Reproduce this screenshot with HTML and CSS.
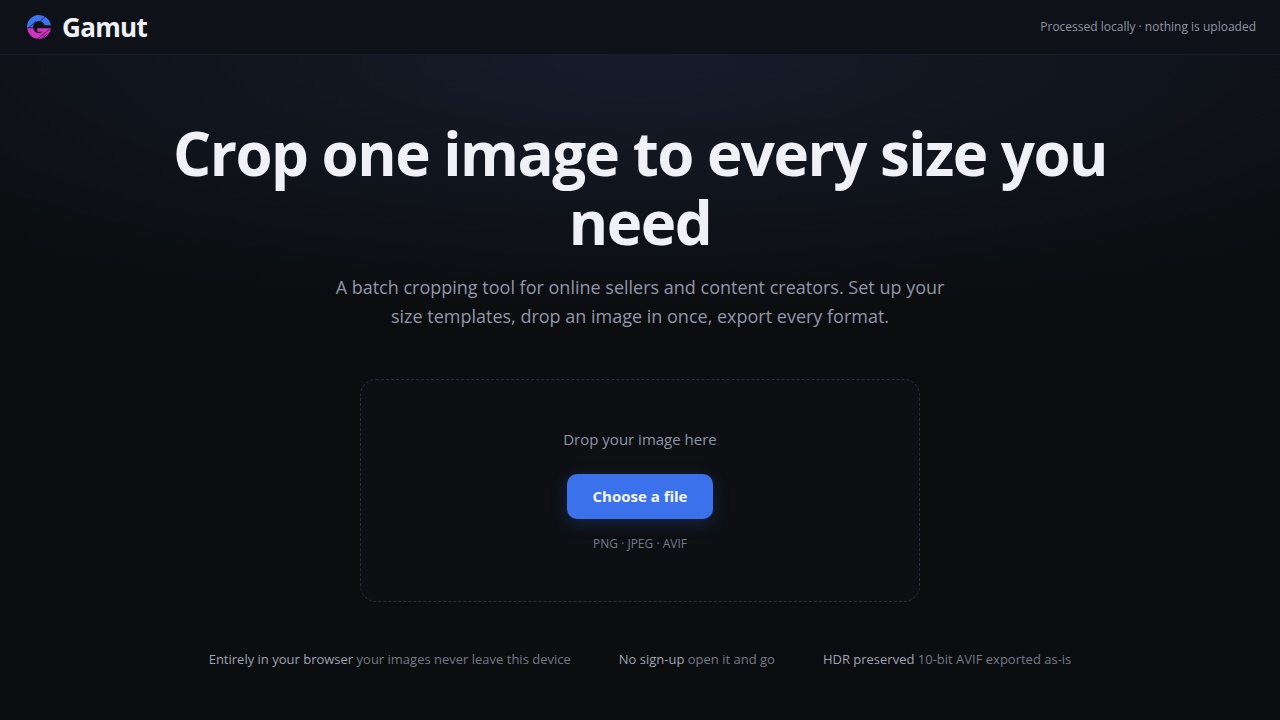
FILE: index.html
```html
<!DOCTYPE html>
<html lang="en">
<head>
<meta charset="utf-8">
<meta name="viewport" content="width=device-width, initial-scale=1">
<title>Gamut</title>
<link rel="stylesheet" href="styles.css">
</head>
<body>
<header class="topbar">
  <div class="brand">
    <svg class="brand-mark" viewBox="0 0 24 24" aria-hidden="true">
      <path class="mark-blue" d="M0 12.6V12A12 12 0 0 1 23.86 10.2H17.6A5.9 5.9 0 0 0 6.1 12.6Z"/>
      <path class="mark-pink" d="M0.07 13.3H6.2A5.9 5.9 0 0 0 15.6 16.8H10.3V13.3H23.93A12 12 0 0 1 0.07 13.3Z"/>
      <path class="mark-cut" d="M18.4 1.4L13.2 6.2M9 6.4L1.8 12.8M22.6 14L10.6 24M20 19L15.4 23"/>
    </svg>
    <span class="brand-name">Gamut</span>
  </div>
  <span class="privacy">Processed locally · nothing is uploaded</span>
</header>
<main class="hero">
  <h1 class="title">Crop one image to every size you need</h1>
  <p class="lead">A batch cropping tool for online sellers and content creators. Set up your size templates, drop an image in once, export every format.</p>
  <section class="dropzone" aria-label="Image upload">
    <p class="drop-label">Drop your image here</p>
    <button class="choose" type="button">Choose a file</button>
    <p class="formats">PNG · JPEG · AVIF</p>
  </section>
  <ul class="features">
    <li><span class="feature-name">Entirely in your browser</span> your images never leave this device</li>
    <li><span class="feature-name">No sign-up</span> open it and go</li>
    <li><span class="feature-name">HDR preserved</span> 10-bit AVIF exported as-is</li>
  </ul>
</main>
</body>
</html>
```
FILE: styles.css
```css
* { box-sizing: border-box; }
body {
  margin: 0;
  min-height: 100vh;
  display: flex;
  flex-direction: column;
  background: #0b0d0f;
  color: #eff1f6;
  font-family: "Open Sans", sans-serif;
}
p, h1, ul { margin: 0; padding: 0; }
.topbar {
  display: flex;
  align-items: center;
  justify-content: space-between;
  padding: 9px 24px;
  background: #0e1118;
  border-bottom: 1px solid #171c28;
}
.brand { display: flex; align-items: center; gap: 11px; padding-left: 3px; }
.brand-mark { width: 24px; height: 24px; }
.mark-blue { fill: #3b74ee; }
.mark-pink { fill: #cf32c0; }
.mark-cut { stroke: #0e1118; stroke-width: 0.7; fill: none; }
.brand-name { font-size: 26px; font-weight: 700; line-height: 36px; letter-spacing: -0.025em; }
.privacy { font-size: 12px; line-height: 18px; color: #8f94a5; }
.hero {
  flex: 1;
  display: flex;
  flex-direction: column;
  align-items: center;
  padding: 64px 24px 32px;
  background: radial-gradient(ellipse 960px 260px at 50% 0, #161c2b, #0b0d0f);
}
.title {
  max-width: 960px;
  font-size: 60px;
  line-height: 69px;
  font-weight: 700;
  letter-spacing: -0.025em;
  text-align: center;
}
.lead {
  max-width: 640px;
  margin-top: 16px;
  font-size: 18px;
  line-height: 29px;
  text-align: center;
  color: #9296a9;
}
.dropzone {
  display: flex;
  flex-direction: column;
  align-items: center;
  width: 100%;
  max-width: 560px;
  margin-top: 48px;
  padding: 48px 24px;
  border: 1px dashed #2a2e3b;
  border-radius: 16px;
  background: #0d0f13;
}
.drop-label { font-size: 15px; line-height: 22px; color: #8f94a5; }
.choose {
  margin-top: 24px;
  padding: 12px 26px;
  border: 0;
  border-radius: 10px;
  background: #3b72eb;
  color: #f5f7fc;
  font: 700 15px/21px "Open Sans", sans-serif;
  box-shadow: 0 4px 16px rgba(59, 114, 235, 0.25);
}
.formats { margin-top: 16px; font-size: 12px; line-height: 18px; color: #767a89; }
.features {
  display: flex;
  flex-wrap: wrap;
  justify-content: center;
  gap: 12px 48px;
  margin-top: 48px;
  list-style: none;
  font-size: 13px;
  line-height: 18px;
  color: #747989;
}
.feature-name { color: #9ea3b3; }
```
